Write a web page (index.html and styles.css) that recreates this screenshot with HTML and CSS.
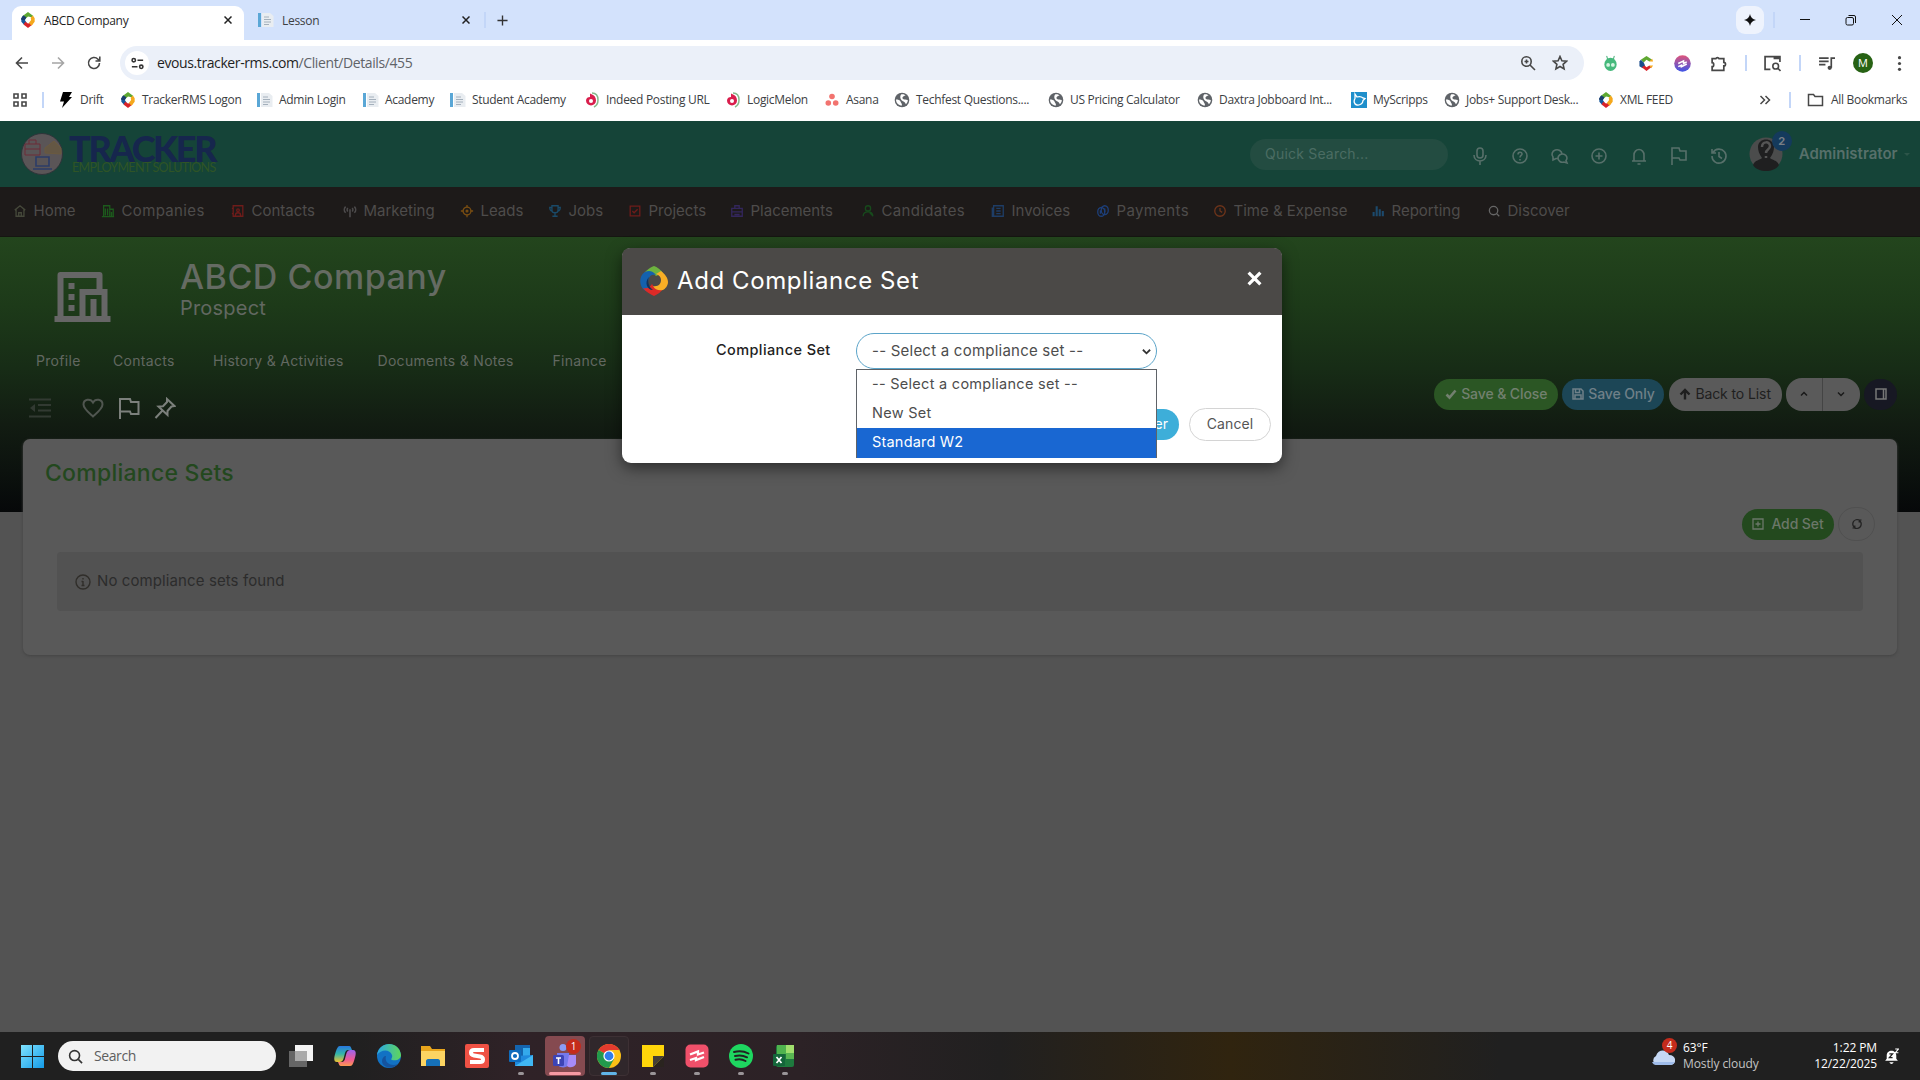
FILE: index.html
```html
<!DOCTYPE html>
<html lang="en">

<head>
    <meta charset="utf-8">
    <title>ABCD Company</title>
    <link rel="stylesheet" href="styles.css">
</head>

<body>
    <!-- shared icons -->
    <svg class="defs">
        <symbol id="tracker" viewBox="0 0 16 18">
            <path d="M8 0 2 4.500 5 8 8 5l4 1 2-1.500z" fill="#5fa832"/>
            <path d="M2.500 4 .5 7v4l3.500 4 2.500-3L4.500 9 6 6z" fill="#17589c"/>
            <path d="M3 14l5 4 5-4-1.500-2L8 13l-3-2z" fill="#d8232a"/>
            <path d="M13.500 4 11 6.500 11.500 9 9 12.500l3 3L15.500 11V7z" fill="#f5a81c"/>
            <path d="M2.500 4 .5 7v2L4.500 9 6 6z" fill="#1b3d6b"/>
        </symbol>
        <symbol id="doc" viewBox="0 0 16 16">
            <path d="M0 1h3v14H0z" fill="#5aa7d6"/><path d="M4 1h8l3.500 3v11H4z" fill="#e9edf1"/>
            <path d="M6 5h5M6 7.500h7M6 10h7M6 12.500h5" stroke="#a4b0bc" fill="none"/>
        </symbol>
        <symbol id="globe" viewBox="0 0 16 16">
            <circle cx="8" cy="8" r="7.300" fill="#5f6368"/>
            <path d="M2 7.500C4 7.500 6 8 6.500 9.500S8 11 8 13.500c-3.500 0-6-2.500-6-6zM7 2.500c2-.8 4 .2 4.500 1C10 4 9 4 8.500 5.500S10 7.500 13.800 8c0 2-1 3.500-2 4.200C11 9 8.500 10 7 7.500 6 6 6 4 7 2.500z" fill="#fff"/>
        </symbol>
        <symbol id="melon" viewBox="0 0 16 16">
            <path d="M8 1c5 0 6 4 6 7s-2 6-4 7" fill="none" stroke="#86b98b" stroke-width="1.500"/>
            <path d="M7 2c3 1 5 3 5 6.500a5 5 0 1 1-10 0C2 6 4 5 6 5V1.500z" fill="#d91e4c"/><circle cx="7" cy="9" r="2" fill="#fff"/>
        </symbol>
        <symbol id="flag" viewBox="0 0 20 20"><path d="M3 19V2h7l1 3h6v9h-6l-1-2H3"/></symbol>
    </svg>

    <!-- browser -->
    <div class="tabstrip">
        <div class="tab active">
            <svg class="i16"><use href="#tracker"/></svg><span>ABCD Company</span>
            <svg class="x" viewBox="0 0 8 8"><path d="M.5.5l7 7M7.500.5l-7 7"/></svg>
        </div>
        <div class="tab">
            <svg class="i16"><use href="#doc"/></svg><span>Lesson</span>
            <svg class="x" viewBox="0 0 8 8"><path d="M.5.5l7 7M7.500.5l-7 7"/></svg>
        </div>
        <i class="sep"></i>
        <svg class="plus" viewBox="0 0 12 12"><path d="M6 .5v11M.5 6h11"/></svg>
        <div class="win">
            <b class="spark"><svg viewBox="0 0 14 14"><path d="M7 0q1 6 7 7-6 1-7 7-1-6-7-7 6-1 7-7z"/></svg></b>
            <i class="sep"></i>
            <svg viewBox="0 0 12 12"><path d="M1 5.500h10"/></svg>
            <svg viewBox="0 0 12 12"><rect x="1" y="3.500" width="7.500" height="7.500" rx="1.500"/><path d="M3.500 1.500H9a1.500 1.500 0 0 1 1.500 1.500v6"/></svg>
            <svg viewBox="0 0 12 12"><path d="M1 1l10 10M11 1 1 11"/></svg>
        </div>
    </div>
    <div class="toolbar">
        <svg class="tb back" viewBox="0 0 16 16"><path d="M14 8H2.500M8 2.500 2.500 8 8 13.500"/></svg>
        <svg class="tb fwd" viewBox="0 0 16 16"><path d="M2 8h11.500M8 2.500 13.500 8 8 13.500"/></svg>
        <svg class="tb reload" viewBox="0 0 16 16"><path d="M13.500 8A5.500 5.500 0 1 1 12 4.200L13.500 6M13.800 1.500V6H9.500"/></svg>
        <div class="url">
            <b class="site"><svg viewBox="0 0 16 16"><circle cx="4" cy="4.500" r="1.800"/><path d="M8 4.500h6M2 11.500h6"/><circle cx="12" cy="11.500" r="1.800"/></svg></b>
            <span>evous.tracker-rms.com<em>/Client/Details/455</em></span>
            <svg class="tb zoom" viewBox="0 0 16 16"><circle cx="6.500" cy="6.500" r="4.700"/><path d="M10 10l5 5M6.500 4.500v4M4.500 6.500h4"/></svg>
            <svg class="tb" viewBox="0 0 16 16"><path d="M8 1.500l1.900 4.300 4.700.4-3.500 3.100 1 4.600L8 11.500l-4.100 2.400 1-4.600L1.400 6.200l4.700-.4z"/></svg>
        </div>
        <div class="exts">
            <svg viewBox="0 0 16 18"><path d="M5 5 4 1M11 5l1-4" stroke="#35a56a"/><ellipse cx="8" cy="10" rx="6.500" ry="7" fill="#45b97c"/><circle cx="5.500" cy="10.500" r="2" fill="#d5f5e2"/><circle cx="10.500" cy="10.500" r="2" fill="#d5f5e2"/></svg>
            <svg viewBox="0 0 16 18"><path d="M8 1 2 5l3 3 3-3 3 2 3-2z" fill="#5fa832"/><path d="M2 5 .5 7v5L4 14l2.500-3L5 8z" fill="#1b4d8c"/><path d="M3 13l5 4 5-4-2-2-3 2-2-2z" fill="#d8232a"/><path d="M14 4l-3 3h4zM11 11h4l-2 3z" fill="#f5a81c"/></svg>
            <svg viewBox="0 0 16 16"><defs><linearGradient id="g1" x2="0" y2="1"><stop stop-color="#e0557a"/><stop offset="1" stop-color="#3d55e8"/></linearGradient></defs><circle cx="8" cy="8" r="7.800" fill="url(#g1)"/><path d="M4 8l5-2.500V8l3-1.500M4 11l3-1.500V11l5-2.500" stroke="#fff" stroke-width="1.400"/></svg>
            <svg viewBox="0 0 16 16"><path d="M2 3.500h3.500a1.600 1.600 0 0 1 3 0H13V7a1.600 1.600 0 0 1 0 3.200V14.500H2v-3.500c2 0 2-3.800 0-3.800z" stroke="#474747" stroke-width="1.600"/></svg>
            <i class="sep"></i>
            <svg viewBox="0 0 16 16"><path d="M6 13.500H1v-12h14v5" stroke="#474747" stroke-width="1.600"/><path d="M9 1h6v3H9z" fill="#474747"/><circle cx="11" cy="10.500" r="2.700" stroke="#474747" stroke-width="1.500"/><path d="M13 12.500l2.500 2.500" stroke="#474747" stroke-width="1.500"/></svg>
            <i class="sep"></i>
            <svg viewBox="0 0 16 16"><path d="M1 3h9M1 6h9M1 9h6M12.500 12V3H16" stroke="#474747" stroke-width="1.600"/><circle cx="11" cy="12" r="2" fill="#474747"/></svg>
            <b class="me">M</b>
            <svg viewBox="0 0 16 16"><g fill="#474747"><circle cx="8" cy="2.500" r="1.500"/><circle cx="8" cy="8" r="1.500"/><circle cx="8" cy="13.500" r="1.500"/></g></svg>
        </div>
    </div>
    <div class="bookmarks">
        <svg class="apps" viewBox="0 0 14 14"><path d="M1 1h4v4H1zM9 1h4v4H9zM1 9h4v4H1zM9 9h4v4H9z"/></svg>
        <i class="sep"></i>
        <div class="marks">
            <a><svg class="i16" viewBox="0 0 16 16"><path d="M5 0h9l-3 5h3L4 16l2-6.500H2z"/></svg>Drift</a>
            <a><svg class="i16"><use href="#tracker"/></svg>TrackerRMS Logon</a>
            <a><svg class="i16"><use href="#doc"/></svg>Admin Login</a>
            <a><svg class="i16"><use href="#doc"/></svg>Academy</a>
            <a><svg class="i16"><use href="#doc"/></svg>Student Academy</a>
            <a><svg class="i16"><use href="#melon"/></svg>Indeed Posting URL</a>
            <a><svg class="i16"><use href="#melon"/></svg>LogicMelon</a>
            <a><svg class="i16" viewBox="0 0 16 16"><g fill="#f2736f"><circle cx="8" cy="4.500" r="2.800"/><circle cx="4.300" cy="11" r="2.800"/><circle cx="11.700" cy="11" r="2.800"/></g></svg>Asana</a>
            <a><svg class="i16"><use href="#globe"/></svg>Techfest Questions....</a>
            <a><svg class="i16"><use href="#globe"/></svg>US Pricing Calculator</a>
            <a><svg class="i16"><use href="#globe"/></svg>Daxtra Jobboard Int...</a>
            <a><svg class="i16" viewBox="0 0 16 16"><path fill="#1f8fcb" d="M0 0h16v16H0z"/><path d="M4 2l2 3c3-1 5 0 6 1l2 .5-2 2c0 3-3 5-6 4.500S2.500 9 4 6.500z" fill="none" stroke="#fff" stroke-width="1.300"/></svg>MyScripps</a>
            <a><svg class="i16"><use href="#globe"/></svg>Jobs+ Support Desk...</a>
            <a><svg class="i16"><use href="#tracker"/></svg>XML FEED</a>
        </div>
        <svg class="more" viewBox="0 0 12 10"><path d="M1.500 1l4 4-4 4M6.500 1l4 4-4 4"/></svg>
        <i class="sep"></i>
        <svg class="folder" viewBox="0 0 16 14"><path d="M1 12.500v-11h5l1.500 2H15v9z"/></svg>
        <span class="all">All Bookmarks</span>
    </div>

    <!-- page -->
    <header class="top">
        <svg class="seal" viewBox="0 0 42 42">
            <circle cx="21" cy="21" r="20.500" fill="#5a5557" stroke="#30353a"/>
            <g fill="none"><path d="M4 11h15v11H4zM8 11V7h7v4M4 16h15" stroke="#6c2d38"/><path d="M24 20v-5l9-7 7 7v6z" stroke="#6b5a3f" fill="#645744"/><path d="M15 24h13v9H15zM12 36h19" stroke="#2c3c68" stroke-width="1.600"/></g>
        </svg>
        <div class="brand"><b>TRACKER</b><span>EMPLOYMENT SOLUTIONS</span></div>
        <div class="quick">Quick Search...</div>
        <div class="tools">
            <svg viewBox="0 0 20 20"><rect x="7" y="2" width="6" height="10" rx="3"/><path d="M4 9c0 8 12 8 12 0M10 15v4"/></svg>
            <svg viewBox="0 0 20 20"><circle cx="10" cy="10" r="7"/><path d="M8 8.500c0-3 4-3 4-.5 0 1.500-2 1.500-2 3.500M10 13v1.500"/></svg>
            <svg viewBox="0 0 20 20"><path d="M12 8a5 4.500 0 1 0-9 3v3l3-1.500h2"/><path d="M8 12a4.500 4 0 1 1 8 2.500l1 2.500-3-1c-3 1-6-1-6-4z"/></svg>
            <svg viewBox="0 0 20 20"><circle cx="10" cy="10" r="7"/><path d="M10 6.500v7M6.500 10h7"/></svg>
            <svg viewBox="0 0 20 20"><path d="M3 15h14M5 15V9a5 5.500 0 0 1 10 0v6M8.500 18h3"/></svg>
            <svg viewBox="0 0 20 20"><use href="#flag"/></svg>
            <svg viewBox="0 0 20 20"><path d="M4 6.500a7 7 0 1 1-1 3.500M3 3v4h4M10 6v4.500l3 2"/></svg>
        </div>
        <div class="avatar">
            <svg viewBox="0 0 34 34"><circle cx="17" cy="17" r="16.500" fill="#4b4c4c"/><path d="M4 28c2-5 7-5 9-7-3-4-4-8-4-11 0-10 16-10 16 0 0 3-1 7-4 11 2 2 7 2 9 7-5 8-21 8-26 0z" fill="#1f1f20"/><path d="M13 10c0-6 8-6 8-1 0 4-4 3-4 7M17 19v2" fill="none" stroke="#555" stroke-width="2.500"/></svg>
            <b>2</b>
        </div>
        <span class="user">Administrator</span><i class="caret"></i>
    </header>
    <nav class="menu">
        <a><svg style="color:#45483a" viewBox="0 0 16 16"><path d="M2 7l6-5 6 5M3.500 6v8h9V6M6.500 14v-4h3v4"/></svg>Home</a>
        <a class="wide"><svg style="color:#1c5a1c" viewBox="0 0 16 16"><path d="M1 14.500h14M3 14V2h7v4h4v8M5 5v8M7.500 5v8M10 7v7M12 9v5"/></svg>Companies</a>
        <a><svg style="color:#6e1c1a" viewBox="0 0 16 16"><path d="M2.500 2h11v12h-11zM5 13c0-4 6-4 6 0M1 5h2M1 11h2"/><circle cx="8" cy="7" r="1.500"/></svg>Contacts</a>
        <a><svg style="color:#4d4b4c" viewBox="0 0 16 16"><path d="M3 3c-2 2-2 5 0 7M13 3c2 2 2 5 0 7M5.500 4.500c-1 1-1 3 0 4M10.500 4.500c1 1 1 3 0 4M8 6v9" stroke-width="1.800"/></svg>Marketing</a>
        <a><svg style="color:#7a4e12" viewBox="0 0 16 16"><circle cx="8" cy="8" r="4.500"/><circle cx="8" cy="8" r="1"/><path d="M8 1v3M8 12v3M1 8h3M12 8h3"/></svg>Leads</a>
        <a><svg style="color:#1a4a68" viewBox="0 0 16 16"><path d="M4.500 2h7v5c0 4-7 4-7 0zM4.500 4H2c0 3 1 4 3 4M11.500 4H14c0 3-1 4-3 4M8 10v4M5 14h6"/></svg>Jobs</a>
        <a><svg style="color:#6e1c1a" viewBox="0 0 16 16"><path d="M2.500 2.500h11v11h-11zM5 8l2 2 4-4"/></svg>Projects</a>
        <a><svg style="color:#33265c" viewBox="0 0 16 16"><path d="M2 5h12v9H2zM5.500 5V2h5v3M2 9h12M5 12h6"/></svg>Placements</a>
        <a class="wide"><svg style="color:#174a1c" viewBox="0 0 16 16"><circle cx="8" cy="5" r="3"/><path d="M2.500 14c0-3 2-5 5.500-5s5.500 2 5.500 5M10 10l4 4"/></svg>Candidates</a>
        <a><svg style="color:#1e3d66" viewBox="0 0 16 16"><path d="M3 2h11v12H3zM1.500 4v10H5M6 5h5M6 8h5M6 11h5"/></svg>Invoices</a>
        <a class="wide"><svg style="color:#1d3f7a" viewBox="0 0 16 16"><ellipse cx="6" cy="9" rx="4" ry="5"/><ellipse cx="10" cy="7" rx="4" ry="5"/><path d="M5 7v4M10 5v4"/></svg>Payments</a>
        <a><svg style="color:#6e341a" viewBox="0 0 16 16"><circle cx="8" cy="8" r="6"/><path d="M8 4.500V8l2.500 1.500"/></svg>Time &amp; Expense</a>
        <a><svg style="color:#1c4a6c" viewBox="0 0 16 16"><path d="M3 14V9M6.500 14V2.500M10 14V6M13.500 14V8" stroke-width="2.400"/></svg>Reporting</a>
        <a><svg style="color:#666" viewBox="0 0 16 16"><circle cx="7.500" cy="7.500" r="4.800"/><path d="M11 11l3 3"/></svg>Discover</a>
    </nav>

    <main>
        <section class="hero">
            <div class="company">
                <svg viewBox="0 0 56 50"><path d="M0 44h3V3a3 3 0 0 1 3-3h39a3 3 0 0 1 3 3v14h5v27h3v6H0zM9 44h16V17h17V6H9zM31 44h5V27h6v17h5V23H31z" fill-rule="evenodd"/><path d="M14 11h6v6h-6zM14 22h6v6h-6zM14 33h6v6h-6z"/></svg>
                <div><h1>ABCD Company</h1><h2>Prospect</h2></div>
            </div>
            <div class="tabs"><a>Profile</a><a>Contacts</a><a>History &amp; Activities</a><a>Documents &amp; Notes</a><a>Finance</a></div>
            <div class="actions">
                <svg class="outdent" viewBox="0 0 22 20"><path d="M0 1.500h22M9 7h13M9 12.500h13M0 18.500h22"/><path d="M6 6v8l-5-4z" fill="#323a32" stroke="none"/></svg>
                <svg class="heart" viewBox="0 0 22 20"><path d="M11 18.500C6 14 1.500 10.500 1.500 6.500c0-5.500 7-6.500 9.500-2 2.500-4.500 9.500-3.500 9.500 2 0 4-4.500 7.500-9.500 12z"/></svg>
                <svg class="lite" viewBox="0 0 22 22"><path d="M2 22V2h10l1 3h7.500v12H13l-1-2.500H2"/></svg>
                <svg class="lite" viewBox="0 0 22 22"><path d="M13 2l7.500 7-3 .5-4 4.500v4l-9-8.500 4.500-.3 4-4.200zM8.500 13.500 1.500 21"/></svg>
                <div class="buttons">
                    <b class="btn green"><svg viewBox="0 0 12 12"><path d="M1.500 6.500l3 3 6-7" stroke-width="2.600"/></svg>Save &amp; Close</b>
                    <b class="btn blue"><svg viewBox="0 0 12 12"><path d="M1 1h8l2 2v8H1zM3.500 1v3.500h4V1M3 11V7h6v4" stroke-width="1.500"/></svg>Save Only</b>
                    <b class="btn grey"><svg viewBox="0 0 12 12"><path d="M6 11.500v-9M1.500 6.500 6 2l4.500 4.500" stroke-width="2.400"/></svg>Back to List</b>
                    <b class="btn pair"><svg viewBox="0 0 12 12"><path d="M3 7.500l3-3 3 3" stroke-width="1.500"/></svg><svg viewBox="0 0 12 12"><path d="M3 4.500l3 3 3-3" stroke-width="1.500"/></svg></b>
                    <b class="btn side"><svg viewBox="0 0 12 12"><path d="M1 1h10v10H1zM8.500 1v10" stroke-width="1.500"/></svg></b>
                </div>
            </div>
        </section>
        <section class="panel">
            <h3>Compliance Sets</h3>
            <div class="row">
                <b class="btn add"><svg viewBox="0 0 12 12"><path d="M1 1h10v10H1zM6 3.500v5M3.500 6h5" stroke-width="1.300"/></svg>Add Set</b>
                <b class="btn refresh"><svg viewBox="0 0 12 12"><path d="M3.500 9.500C.5 7 1.500 2 6 1.500c1.500 0 2.500.5 3 1M8.500 2.500c3 2.500 2 7.500-2.500 8-1.500 0-2.500-.5-3-1M1.500 10h2.300V7.500M10.500 2H8.200v2.500" stroke-width="1.200"/></svg></b>
            </div>
            <div class="empty"><svg viewBox="0 0 16 16"><circle cx="8" cy="8" r="7"/><path d="M8 7v4.500M8 4v1.500M6.500 7.500H8M6.500 11.500h3"/></svg><span>No compliance sets found</span></div>
        </section>

        <div class="modal">
            <div class="modal-head">
                <svg class="logo" viewBox="0 0 28 30">
                    <path d="M14 0C9 2 4 6 3 10c4-4 10-3 13 0l7-3c-2-3-6-6-9-7z" fill="#6db33f"/>
                    <path d="M5 6C-1 10-1 18 3 23c3 3 7 3 10 2-5-4-6-8-4-13 1-3 4-4 7-3-3-4-7-5-11-3z" fill="#1461ad"/>
                    <path d="M3 22c3 4 7 6 11 8 4-2 7-4 9-7-5 1-9-1-11-5-2 3-5 5-9 4z" fill="#dc2a27"/>
                    <path d="M21 5c4 3 7 7 7 11 0 4-3 7-5 8-4 1-8 0-10-4 5 1 8-2 8-6 0-3-2-5-5-6z" fill="#f8ae25"/>
                    <path d="M9 11c-2 5 0 10 4 13-6 0-9-8-4-13z" fill="#12325c"/>
                </svg>
                <h4>Add Compliance Set</h4>
                <svg class="close" viewBox="0 0 14 14"><path d="M1.500 1.500l11 11M12.500 1.500l-11 11"/></svg>
            </div>
            <div class="modal-body">
                <label>Compliance Set</label>
                <div class="select">-- Select a compliance set --
                    <svg viewBox="0 0 10 8"><path d="M1 1.500l4 4 4-4"/></svg>
                    <ul><li>-- Select a compliance set --</li><li>New Set</li><li class="on">Standard W2</li></ul>
                </div>
            </div>
            <div class="modal-foot"><b class="enter">er</b><b class="cancel">Cancel</b></div>
        </div>
    </main>

    <!-- windows taskbar -->
    <footer class="taskbar">
        <svg class="start" viewBox="0 0 23 23"><defs><linearGradient id="w" x2="1" y2="1"><stop stop-color="#7fe3ff"/><stop offset="1" stop-color="#149be8"/></linearGradient></defs><path d="M0 0h11v11H0zM12 0h11v11H12zM0 12h11v11H0zM12 12h11v11H12z" fill="url(#w)"/></svg>
        <div class="search"><svg viewBox="0 0 16 16"><circle cx="7" cy="7" r="5.300"/><path d="M11 11l4 4"/></svg>Search</div>
        <div class="task"><svg viewBox="0 0 24 24"><path fill="#666" d="M0 7h18v16H0z"/><path fill="#f4f4f4" d="M6 1h18v16H6z"/><path fill="#aaa" d="M6 7h12v10H6z"/></svg></div>
        <div class="task"><svg viewBox="0 0 24 24"><defs><linearGradient id="c1" x2="0" y2="1"><stop stop-color="#2877e0"/><stop offset=".5" stop-color="#33b7a8"/><stop offset="1" stop-color="#f2c230"/></linearGradient><linearGradient id="c2" x2="0" y2="1"><stop stop-color="#9a63ee"/><stop offset=".6" stop-color="#f05a93"/><stop offset="1" stop-color="#fb9a50"/></linearGradient></defs><path d="M7 2h9c2 0 2 2 3 4h-4c-3 0-3 4-4 7-1 4-2 5-5 5H4c-4 0-3-5-1-11 1-3 2-5 4-5z" fill="url(#c1)"/><path d="M17 22H8c-2 0-2-2-3-4h4c3 0 3-4 4-7 1-4 2-5 5-5h2c4 0 3 5 1 11-1 3-2 5-4 5z" fill="url(#c2)"/></svg></div>
        <div class="task"><svg viewBox="0 0 24 24"><defs><linearGradient id="e" x2="1"><stop stop-color="#2aa7e5"/><stop offset="1" stop-color="#5fd65a"/></linearGradient></defs><circle cx="12" cy="12" r="12" fill="#1272c4"/><path d="M0 11C2-3 22-4 24 11c0 4-4 6-9 5-2-1 1-2 0-5C13 5 4 5 0 11z" fill="url(#e)"/><path d="M9 12c-2 7 5 11 12 8-5 6-16 4-16-3 0-3 2-5 4-5z" fill="#15539e"/></svg></div>
        <div class="task"><svg viewBox="0 0 24 24"><path d="M0 2h9l2 3h13v17H0z" fill="#e8a51c"/><path d="M0 7h24v15H0z" fill="#fcd462"/><path d="M5 22v-5c0-1 1-2 2-2h10c1 0 2 1 2 2v5z" fill="#1671b9"/></svg></div>
        <div class="task"><svg viewBox="0 0 24 24"><rect width="24" height="24" rx="2" fill="#ef5144"/><path d="M19 6H9q-3 0-3 2.500Q6 11 9 11.500l6 1q3 .5 3 3T15 18H5" fill="none" stroke="#fff" stroke-width="4"/></svg></div>
        <div class="task run"><svg viewBox="0 0 24 24"><path fill="#1464ae" d="M6 1h15v12H6z"/><path fill="#33a9ec" d="M14 4h7v8h-7z"/><path fill="#1f89dd" d="M6 12l18-1v11H6z"/><path d="M6 22 24 11v11z" fill="#40b7f3"/><rect y="6" width="12" height="12" rx="1" fill="#0f6cbd"/><circle cx="6" cy="12" r="3" fill="none" stroke="#fff" stroke-width="1.800"/></svg></div>
        <div class="task run teams"><svg viewBox="0 0 24 24"><circle cx="10" cy="3.500" r="3.500" fill="#8a9cf5"/><path fill="#7579eb" d="M4 9h12v12c-4 4-12 3-12-3z"/><path fill="#a78bf8" d="M16 11h7v9c-2 4-7 4-9 2z"/><rect y="11" width="11" height="11" rx="1.500" fill="#3d44b5"/><path d="M3 14h5M5.500 14v6" stroke="#fff" stroke-width="1.600"/></svg><b>1</b></div>
        <div class="task run chrome"><svg viewBox="0 0 24 24"><circle cx="12" cy="12" r="12" fill="#fbc116"/><path d="M12 12 1.600 6A12 12 0 0 1 22.400 6z" fill="#e33b2e"/><path d="M12 12 1.600 6A12 12 0 0 0 12 24l5-9z" fill="#219a4c"/><path d="M12 6h10.400L17 15z" fill="#fbc116"/><circle cx="12" cy="12" r="5.600" fill="#fff"/><circle cx="12" cy="12" r="4.400" fill="#2f7de9"/></svg></div>
        <div class="task run"><svg viewBox="0 0 24 24"><path fill="#ffd60a" d="M1 1h22v22H1z"/><path fill="#443f37" d="M12 23V12h11z"/><path fill="#2a241f" d="M12 23h11V12z"/></svg></div>
        <div class="task run"><svg viewBox="0 0 24 24"><rect x=".5" y=".5" width="23" height="23" rx="5" fill="#f0506a"/><path d="M5 10.500l8-3v3l6-2M5 16l6-2v2l8-3" fill="none" stroke="#fff" stroke-width="2.300"/></svg></div>
        <div class="task run"><svg viewBox="0 0 24 24"><circle cx="12" cy="12" r="12" fill="#1ed760"/><path d="M5 8c5-1.500 10-1 14.500 1.500M6 12c4-1 8-.8 12 1.300M6.500 15.800c4-1 7-.5 10 1.200" fill="none" stroke="#222" stroke-width="2" stroke-linecap="round"/></svg></div>
        <div class="task run"><svg viewBox="0 0 24 24"><rect x="3" y="1" width="18" height="22" rx="2" fill="#1e7a3e"/><path fill="#4fb34e" d="M4 1h9v9H4z"/><path fill="#a0df6d" d="M13 1h8v8h-8z"/><path fill="#59b752" d="M13 9h8v6h-8z"/><rect y="10" width="12" height="12" rx="1" fill="#14663a"/><path d="M3.500 13l5 6M8.500 13l-5 6" stroke="#fff" stroke-width="1.700"/></svg></div>
        <div class="weather">
            <svg viewBox="0 0 24 16"><path d="M5 15a5 5 0 0 1 0-9C7-1 16-1 18 5c8 0 8 10 1 10z" fill="#c5d8f4"/><path d="M1 12c1 2 2 3 4 3h14c2 0 4-1 4.500-3z" fill="#9fbcea"/></svg>
            <b>4</b>
            <p>63°F<br><span>Mostly cloudy</span></p>
        </div>
        <p class="clock">1:22 PM<br>12/22/2025</p>
        <svg class="bell" viewBox="0 0 14 16"><path d="M1 12h12l-1.500-2V7c0-6-9-6-9 0v3zM5 13.500c1 2 3 2 4 0z" fill="#fff"/><path d="M5 5.500h3L5 9h3" fill="none" stroke="#222" stroke-width="1.200"/><path d="M10.500 1h3l-3 3.500h3" fill="none" stroke="#fff"/></svg>
    </footer>
</body>

</html>
```

FILE: styles.css
```css
* {
    box-sizing: border-box;
}

body {
    margin: 0;
    width: 1920px;
    height: 1080px;
    overflow: hidden;
    display: flex;
    flex-direction: column;
    background: #535353;
    font-family: Inter, "Liberation Sans", sans-serif;
}

h1, h2, h3, h4, p, ul {
    margin: 0;
    padding: 0;
    font-weight: 500;
}

svg {
    flex: none;
    fill: none;
}

i, em {
    font-style: normal;
}

.defs {
    position: absolute;
    width: 0;
    height: 0;
}

.i16 {
    width: 16px;
    height: 16px;
    fill: #000;
}

.sep {
    flex: none;
    width: 2px;
    height: 16px;
    background: #c3d6f8;
}

/* browser */
.tabstrip, .toolbar, .bookmarks {
    display: flex;
    align-items: center;
    flex: none;
    font-family: "Open Sans", "Noto Sans", sans-serif;
    font-size: 12px;
    color: #3c4043;
    background: #fff;
}

.tabstrip {
    height: 40px;
    padding-left: 12px;
    background: #d3e2fc;
}

.tab {
    display: flex;
    align-items: center;
    height: 34px;
    width: 232px;
    margin-top: 6px;
    padding: 0 12px 6px 8px;
    letter-spacing: -.3px;
}

.tab span {
    flex: 1;
    padding-left: 8px;
}

.tab.active {
    background: #fff;
    border-radius: 9px 9px 0 0;
    color: #1f1f1f;
}

.tab + .tab {
    width: 240px;
    padding-left: 14px;
}

.tab .x {
    width: 8px;
    height: 8px;
    stroke: #222;
    stroke-width: 1.5;
}

.tab + .tab .x {
    margin-right: 2px;
}

.plus {
    width: 11px;
    height: 11px;
    margin-left: 11px;
    stroke: #333;
    stroke-width: 1.5;
}

.win {
    display: flex;
    align-items: center;
    margin-left: auto;
    padding-right: 17px;
}

.win svg {
    width: 12px;
    height: 12px;
    stroke: #111;
    margin-left: 34px;
}

.win .sep + svg {
    margin-left: 24px;
}

.spark {
    display: flex;
    justify-content: center;
    align-items: center;
    width: 28px;
    height: 28px;
    margin-right: 9px;
    border-radius: 9px;
    background: #eef3fd;
}

.win .spark svg {
    margin: 0;
    fill: #111;
    stroke: none;
}

.toolbar {
    height: 46px;
    padding-left: 14px;
}

.tb {
    width: 16px;
    height: 16px;
    margin-right: 20px;
    stroke: #474747;
    stroke-width: 1.6;
}

.fwd {
    stroke: #a5a5a5;
}

.reload {
    margin-right: 18px;
}

.url {
    display: flex;
    align-items: center;
    flex: none;
    width: 1464px;
    height: 34px;
    padding-left: 5px;
    border-radius: 17px;
    background: #ebf0f9;
    font-size: 14px;
    letter-spacing: -.4px;
    color: #1f1f1f;
}

.url span {
    flex: 1;
    padding: 0 0 1px 8px;
}

.url em {
    color: #5f6368;
}

.url .tb {
    margin-right: 16px;
}

.site {
    display: flex;
    justify-content: center;
    align-items: center;
    width: 24px;
    height: 24px;
    border-radius: 50%;
    background: #fff;
}

.site svg {
    width: 15px;
    height: 15px;
    stroke: #333;
    stroke-width: 1.7;
}

.exts {
    display: flex;
    align-items: center;
    padding-left: 18px;
}

.exts svg {
    width: 17px;
    height: 17px;
    margin-right: 19px;
}

.exts .sep + svg, .exts svg:nth-child(4) {
    margin-right: 18px;
}

.exts .sep {
    margin-right: 17px;
}

.me {
    flex: none;
    width: 20px;
    height: 20px;
    margin: 0 18px 0 0;
    border-radius: 50%;
    background: #276214;
    color: #fff;
    font-size: 11px;
    font-weight: 400;
    line-height: 20px;
    text-align: center;
}

.exts .me + svg {
    margin-right: 0;
}

.bookmarks {
    height: 35px;
    padding: 0 0 8px 13px;
    letter-spacing: -.3px;
}

.apps {
    width: 14px;
    height: 14px;
    margin-right: 15px;
    stroke: #474747;
    stroke-width: 1.6;
}

.marks {
    display: grid;
    grid-template-columns: 62px 137px 106px 87px 134px 141px 99px 70px 154px 149px 154px 93px 154px 90px;
    margin-left: 14px;
}

.marks a {
    display: flex;
    align-items: center;
    gap: 6px;
    white-space: nowrap;
}

.more {
    width: 12px;
    height: 10px;
    margin: 0 18px 0 71px;
    stroke: #474747;
    stroke-width: 1.5;
}

.folder {
    width: 17px;
    height: 14px;
    margin: 0 7px 0 16px;
    stroke: #474747;
    stroke-width: 1.5;
}

.all {
    white-space: nowrap;
}

/* app header */
.top {
    display: flex;
    align-items: center;
    flex: none;
    height: 66px;
    padding-left: 21px;
    background: #154438;
}

.seal {
    width: 42px;
    height: 42px;
}

.brand {
    width: 1180px;
    padding-left: 6px;
    font-family: Lato, sans-serif;
    white-space: nowrap;
}

.brand b, .brand span {
    display: block;
}

.brand b {
    font-size: 36px;
    font-weight: 900;
    line-height: 27px;
    letter-spacing: -2.3px;
    color: #16264d;
}

.brand span {
    padding-left: 3px;
    font-size: 12.5px;
    line-height: 12px;
    letter-spacing: -.7px;
    color: #2f5426;
}

.quick {
    width: 198px;
    height: 31px;
    margin-left: 7px;
    padding-left: 15px;
    border-radius: 16px;
    background: #234c41;
    color: #4b6c63;
    font-size: 14px;
    line-height: 29px;
    letter-spacing: .2px;
}

.tools {
    display: flex;
    gap: 19.8px;
    margin: 3px 0 0 22px;
}

.tools svg {
    width: 20px;
    height: 20px;
    stroke: #57706a;
    stroke-width: 1.6;
}

.avatar {
    position: relative;
    height: 34px;
    margin-left: 20px;
}

.avatar svg {
    width: 34px;
    height: 34px;
}

.avatar b {
    position: absolute;
    left: 23px;
    top: -6px;
    width: 20px;
    height: 20px;
    border-radius: 50%;
    background: #143a5c;
    color: #777e85;
    font-size: 11px;
    line-height: 20px;
    text-align: center;
}

.user {
    margin: -2px 0 0 16px;
    font-size: 15px;
    font-weight: 600;
    color: #57706a;
}

.caret {
    margin-left: 6px;
    border: 3px solid transparent;
    border-top-color: #2d5549;
    border-bottom: 0;
}

.menu {
    display: grid;
    grid-template-columns: 88px 130px 112px 117px 88px 80px 102px 131px 130px 105px 117px 158px 116px 100px;
    align-items: center;
    flex: none;
    height: 50px;
    padding: 0 0 2px 13px;
    border-bottom: 1px solid #151611;
    background: #1d1a19;
    color: #4e4c4b;
    font-size: 15px;
}

.menu a {
    display: flex;
    align-items: center;
    gap: 6.5px;
    white-space: nowrap;
}

.menu .wide {
    letter-spacing: .35px;
}

.menu svg {
    width: 14px;
    height: 14px;
    stroke: currentColor;
    stroke-width: 1.5;
}

/* hero */
main {
    position: relative;
    flex: 1;
}

.hero {
    height: 275px;
    padding-top: 20px;
    background: linear-gradient(#23451d 0%, #1d3a19 25%, #172c16 48%, #121c12 68%, #0c120e 85%, #060809 100%);
}

.company {
    display: flex;
    height: 85px;
    padding-left: 54px;
}

.company svg {
    width: 57px;
    height: 50px;
    margin: 15px 69px 0 0;
    fill: #666;
}

.company h1 {
    padding-top: 1px;
    font-size: 34px;
    line-height: 38px;
    letter-spacing: .5px;
    color: #656b63;
}

.company h2 {
    font-size: 20px;
    font-weight: 400;
    line-height: 25px;
    letter-spacing: .2px;
    color: #626861;
}

.tabs {
    display: grid;
    grid-template-columns: 77px 100px 164.5px 175px 100px;
    padding-left: 36px;
    font-size: 14px;
    line-height: 38px;
    letter-spacing: .3px;
    color: #626861;
}

.actions {
    display: flex;
    align-items: center;
    height: 56px;
    margin-top: -5px;
    padding: 0 23px 0 29px;
}

.actions > svg {
    width: 22px;
    height: 22px;
    margin: 9px 14px 0 0;
    stroke: #666b66;
    stroke-width: 2;
}

.actions > .outdent {
    margin-right: 31px;
    stroke: #323a32;
}

.actions > .heart {
    stroke: #505650;
}

.actions > .lite {
    stroke: #7c807c;
}

.buttons {
    display: flex;
    align-items: center;
    gap: 4.2px;
    margin: -18px 0 0 auto;
}

.btn {
    display: flex;
    justify-content: center;
    align-items: center;
    gap: 4px;
    height: 31px;
    padding-bottom: 1px;
    border-radius: 16px;
    font-size: 14px;
    font-weight: 500;
    white-space: nowrap;
    letter-spacing: -.1px;
}

.btn svg {
    width: 12px;
    height: 12px;
    stroke: currentColor;
}

.green {
    width: 124px;
    background: #2b5624;
    color: #72806f;
}

.blue {
    width: 102px;
    background: #1c4656;
    color: #6f8088;
}

.grey {
    width: 113px;
    height: 33px;
    background: #5a5a5a;
    color: #1f1f1f;
    font-weight: 400;
}

.pair {
    width: 74px;
    height: 33px;
    gap: 25px;
    background: linear-gradient(90deg, #5a5a5a 36px, #444 36px, #444 37px, #5a5a5a 37px);
    color: #1a1a1a;
}

.side {
    width: 33px;
    height: 31px;
    background: #171823;
    color: #777;
}

/* content card */
.panel {
    position: relative;
    height: 216px;
    margin: -73px 23px 0;
    padding: 18px 34px 0;
    border-radius: 7px;
    background: #595959;
    box-shadow: 0 1px 3px #444;
}

.panel h3 {
    margin-left: -12px;
    font-size: 23px;
    line-height: 32px;
    letter-spacing: .25px;
    color: #23481e;
}

.row {
    display: flex;
    justify-content: flex-end;
    align-items: center;
    gap: 4px;
    margin: 18px -12px 11px 0;
}

.add {
    width: 92px;
    gap: 7px;
    background: #23491e;
    color: #6b7769;
}

.refresh {
    width: 37px;
    height: 34px;
    padding: 0;
    border: 1px solid #505050;
    border-radius: 18px;
    color: #222;
}

.empty {
    display: flex;
    align-items: center;
    gap: 6px;
    height: 59px;
    padding-left: 18px;
    border-radius: 4px;
    background: #525252;
    color: #2c2c2c;
    font-size: 15px;
    letter-spacing: .1px;
}

.empty span {
    padding-bottom: 2px;
}

.empty svg {
    width: 16px;
    height: 16px;
    stroke: #302e2a;
    stroke-width: 1.4;
}

/* modal sits over the page */
.modal {
    position: absolute;
    left: 622px;
    top: 11px;
    width: 660px;
    height: 215px;
    border-radius: 9px;
    background: #fff;
    box-shadow: 0 5px 15px rgba(0, 0, 0, .5);
}

.modal-head {
    display: flex;
    align-items: center;
    height: 67px;
    padding: 0 20px 2px 18px;
    border-radius: 8px 8px 0 0;
    background: #4b4947;
    color: #fff;
}

.logo {
    width: 28px;
    height: 30px;
    margin-right: 9px;
}

.modal-head h4 {
    flex: 1;
    font-size: 24px;
    font-weight: 400;
    letter-spacing: .6px;
}

.close {
    width: 15px;
    height: 15px;
    margin-bottom: 5px;
    stroke: #fff;
    stroke-width: 3;
}

.modal-body {
    display: flex;
    height: 93px;
    padding: 18px 0 0 94px;
    font-size: 15px;
    line-height: 34px;
    color: #4d4d4d;
}

.modal-body label {
    width: 140px;
    font-size: 14.5px;
    font-weight: 500;
    letter-spacing: .4px;
    color: #222;
}

.select {
    position: relative;
    width: 301px;
    height: 36px;
    padding-left: 15px;
    border: 1px solid #5ba4c9;
    border-radius: 18px;
    letter-spacing: .23px;
}

.select > svg {
    position: absolute;
    right: 5px;
    top: 14px;
    width: 9px;
    height: 8px;
    stroke: #333;
    stroke-width: 2;
}

.select ul {
    position: absolute;
    z-index: 1;
    left: -1px;
    top: 35px;
    width: 301px;
    height: 89px;
    border: 1px solid #5f6368;
    background: #fff;
    list-style: none;
}

.select li {
    height: 29px;
    padding-left: 15px;
    font-size: 14.5px;
    font-weight: 400;
    line-height: 28px;
    letter-spacing: .28px;
}

.select li.on {
    height: 30px;
    background: #1967d2;
    color: #fff;
    letter-spacing: .2px;
}

.modal-foot {
    display: flex;
    justify-content: flex-end;
    align-items: center;
    gap: 10px;
    height: 33px;
    padding-right: 11px;
    font-size: 14px;
    text-align: center;
}

.modal-foot b {
    font-weight: 400;
}

.enter {
    width: 70px;
    height: 31px;
    padding-right: 11px;
    border-radius: 16px;
    background: #3daed9;
    color: #fff;
    line-height: 29px;
    text-align: right;
}

.cancel {
    width: 82px;
    height: 33px;
    border: 1px solid #d4d4d4;
    border-radius: 17px;
    color: #555;
    line-height: 29px;
    letter-spacing: .1px;
}

/* taskbar */
.taskbar {
    display: flex;
    align-items: center;
    flex: none;
    height: 48px;
    padding-left: 21px;
    background: linear-gradient(90deg, #202020 350px, #2f2227 520px, #2c2226 800px, #212020 1000px, #30240f 1230px, #202020 1500px);
    color: #fff;
    font-family: "Open Sans", "Noto Sans", sans-serif;
    font-size: 12px;
    line-height: 16px;
}

.start {
    width: 23px;
    height: 23px;
    margin-right: 14px;
}

.search {
    display: flex;
    align-items: center;
    gap: 11px;
    width: 218px;
    height: 30px;
    margin-right: 3px;
    padding-left: 10px;
    border-radius: 15px;
    background: #f2f2f2;
    color: #5e5e5e;
    font-size: 14px;
    letter-spacing: -.4px;
}

.search svg {
    width: 15px;
    height: 15px;
    stroke: #333;
    stroke-width: 1.7;
}

.task {
    position: relative;
    display: flex;
    justify-content: center;
    align-items: center;
    width: 44px;
    height: 40px;
}

.task svg {
    width: 24px;
    height: 24px;
}

.run::after {
    content: "";
    position: absolute;
    bottom: 1px;
    width: 6px;
    height: 3px;
    border-radius: 2px;
    background: #9a9598;
}

.teams, .chrome {
    width: 40px;
    margin: 0 2px;
    border-radius: 4px;
    background: #854a50;
}

.teams::after {
    width: 32px;
    background: #f59aa3;
}

.chrome {
    border: 1px solid #3d3034;
    background: #30272b;
}

.chrome::after {
    width: 16px;
    bottom: 0;
    background: #60b4e8;
}

.teams b, .weather b {
    position: absolute;
    width: 15px;
    height: 15px;
    border-radius: 50%;
    background: #c42b1c;
    font-size: 10px;
    font-weight: 400;
    line-height: 15px;
    text-align: center;
}

.teams b {
    right: 4px;
    top: 3px;
}

.weather {
    position: relative;
    display: flex;
    align-items: center;
    gap: 8px;
    width: 126px;
    margin-left: auto;
    white-space: nowrap;
    letter-spacing: -.1px;
}

.weather svg {
    width: 24px;
    height: 16px;
    margin-top: 3px;
}

.weather b {
    left: 11px;
    top: -2px;
}

.weather span {
    color: #c4c4c4;
}

.clock {
    width: 100px;
    text-align: right;
    letter-spacing: -.1px;
}

.bell {
    width: 15px;
    height: 17px;
    margin: 0 21px 0 7px;
}
```
